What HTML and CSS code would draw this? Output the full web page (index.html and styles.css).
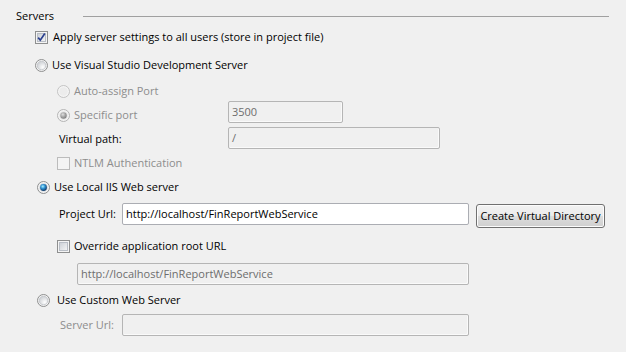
FILE: index.html
```html
<!DOCTYPE html>
<html>
<head>
<meta charset="utf-8">
<link rel="stylesheet" href="styles.css">
</head>
<body>
<div class="panel">
  <div class="header"><span class="title">Servers</span><span class="rule"></span></div>

  <div class="row r-apply">
    <svg class="box" width="13" height="13" viewBox="0 0 13 13"><use href="#cb-checked"/></svg>
    <span class="lbl">Apply server settings to all users (store in project file)</span>
  </div>

  <div class="row r-vs">
    <svg class="rad" width="13" height="13" viewBox="0 0 13 13"><use href="#rb-off"/></svg>
    <span class="lbl">Use Visual Studio Development Server</span>
  </div>

  <div class="row r-auto sub">
    <svg class="rad" width="13" height="13" viewBox="0 0 13 13"><use href="#rb-dis"/></svg>
    <span class="lbl dis">Auto-assign Port</span>
  </div>

  <div class="row r-spec sub">
    <div class="lead">
      <svg class="rad" width="13" height="13" viewBox="0 0 13 13"><use href="#rb-dis-on"/></svg>
      <span class="lbl dis">Specific port</span>
    </div>
    <div class="input dis-in port">3500</div>
  </div>

  <div class="row r-vpath">
    <span class="lbl field-lbl">Virtual path:</span>
    <div class="input dis-in vpath">/</div>
  </div>

  <div class="row r-ntlm sub">
    <svg class="box" width="13" height="13" viewBox="0 0 13 13"><use href="#cb-dis"/></svg>
    <span class="lbl dis">NTLM Authentication</span>
  </div>

  <div class="row r-iis">
    <svg class="rad" width="13" height="13" viewBox="0 0 13 13"><use href="#rb-on"/></svg>
    <span class="lbl">Use Local IIS Web server</span>
  </div>

  <div class="row r-proj">
    <span class="lbl field-lbl">Project Url:</span>
    <div class="input url">http://localhost/FinReportWebService</div>
    <div class="btn">Create Virtual Directory</div>
  </div>

  <div class="row r-over sub">
    <svg class="box" width="13" height="13" viewBox="0 0 13 13"><use href="#cb-off"/></svg>
    <span class="lbl">Override application root URL</span>
  </div>

  <div class="row r-root">
    <div class="input dis-in root">http://localhost/FinReportWebService</div>
  </div>

  <div class="row r-custom">
    <svg class="rad" width="13" height="13" viewBox="0 0 13 13"><use href="#rb-off"/></svg>
    <span class="lbl">Use Custom Web Server</span>
  </div>

  <div class="row r-server">
    <span class="lbl field-lbl dis">Server Url:</span>
    <div class="input dis-in surl"></div>
  </div>
</div>

<svg class="defs" width="0" height="0">
  <defs>
    <linearGradient id="cbFill" x1="0" y1="0" x2="1" y2="1">
      <stop offset="0" stop-color="#cbcfd5"/>
      <stop offset="1" stop-color="#f6f6f6"/>
    </linearGradient>
    <radialGradient id="rbFill" cx="0.65" cy="0.7" r="0.7">
      <stop offset="0" stop-color="#ffffff"/>
      <stop offset="1" stop-color="#cdd0d4"/>
    </radialGradient>
    <radialGradient id="dotBlue" cx="0.4" cy="0.35" r="0.7">
      <stop offset="0" stop-color="#a8f0ff"/>
      <stop offset="0.45" stop-color="#2c8fd0"/>
      <stop offset="1" stop-color="#0c2e5a"/>
    </radialGradient>
    <radialGradient id="dotGray" cx="0.4" cy="0.35" r="0.7">
      <stop offset="0" stop-color="#e0e0e0"/>
      <stop offset="0.5" stop-color="#a8a8a8"/>
      <stop offset="1" stop-color="#7a7a7a"/>
    </radialGradient>
    <g id="cb-checked">
      <rect x="0.5" y="0.5" width="12" height="12" fill="#f4f4f4" stroke="#8e8f8f"/>
      <rect x="2.5" y="2.5" width="8" height="8" fill="url(#cbFill)" stroke="#b9bec6"/>
      <path d="M3.2 6.6 L5.3 9.2 L9.8 2.6" fill="none" stroke="#2a3f8f" stroke-width="1.7"/>
    </g>
    <g id="cb-off">
      <rect x="0.5" y="0.5" width="12" height="12" fill="#f4f4f4" stroke="#8e8f8f"/>
      <rect x="2.5" y="2.5" width="8" height="8" fill="url(#cbFill)" stroke="#b9bec6"/>
    </g>
    <g id="cb-dis">
      <rect x="0.5" y="0.5" width="12" height="12" fill="#f4f4f4" stroke="#bcbcbc"/>
    </g>
    <g id="rb-off">
      <circle cx="6.5" cy="6.5" r="6" fill="#f4f4f4" stroke="#8e8f8f"/>
      <circle cx="6.5" cy="6.5" r="4.3" fill="url(#rbFill)" stroke="#c0c3c8" stroke-width="0.8"/>
    </g>
    <g id="rb-on">
      <circle cx="6.5" cy="6.5" r="6" fill="#f4f4f4" stroke="#8e8f8f"/>
      <circle cx="6.5" cy="6.5" r="4.3" fill="#d4d7dc"/>
      <circle cx="6.5" cy="6.5" r="3.4" fill="url(#dotBlue)"/>
    </g>
    <g id="rb-dis">
      <circle cx="6.5" cy="6.5" r="6" fill="#f4f4f4" stroke="#c3c3c3"/>
      <circle cx="6.5" cy="6.5" r="4.3" fill="#ececec"/>
    </g>
    <g id="rb-dis-on">
      <circle cx="6.5" cy="6.5" r="6" fill="#f4f4f4" stroke="#b4b4b4"/>
      <circle cx="6.5" cy="6.5" r="4.3" fill="#e6e6e6"/>
      <circle cx="6.5" cy="6.5" r="3.2" fill="url(#dotGray)"/>
    </g>
  </defs>
</svg>
</body>
</html>
```
FILE: styles.css
```css
html, body {
  margin: 0;
  padding: 0;
  background: #f0f0f0;
}
body {
  width: 626px;
  height: 352px;
  overflow: hidden;
  font-family: "Open Sans", "Noto Sans", sans-serif;
  font-size: 11px;
  color: #000;
}
.panel {
  display: flex;
  flex-direction: column;
  padding-top: 8px;
}
.header {
  display: flex;
  height: 16px;
  padding-left: 16px;
  padding-right: 17px;
}
.title {
  line-height: 16px;
  white-space: nowrap;
}
.rule {
  flex: 1;
  height: 0;
  border-top: 1px solid #a0a0a0;
  margin-top: 8px;
  margin-left: 29px;
}
.row {
  display: flex;
  align-items: center;
  height: 16px;
  white-space: nowrap;
}
.lbl { line-height: 16px; }
.dis { color: #8d8d8d; }
.box, .rad { flex: none; display: block; }

.r-apply { margin-top: 5px; padding-left: 35px; }
.r-apply .box { margin-right: 5px; }
.r-vs { margin-top: 12px; padding-left: 35px; }
.r-vs .rad { margin-right: 4px; }
.sub { padding-left: 57px; }
.sub .rad, .sub .box { margin-right: 4px; }
.r-auto { margin-top: 10px; }
.r-spec { margin-top: 2px; height: 22px; }
.lead { display: flex; align-items: center; width: 171px; margin-top: 6px; }
.r-vpath { margin-top: 4px; height: 22px; padding-left: 59px; }
.r-vpath .field-lbl { width: 169px; margin-top: 2px; }
.r-ntlm { margin-top: 6px; }
.r-iis { margin-top: 8px; padding-left: 37px; }
.r-iis .rad { margin-right: 4px; }
.r-proj { margin-top: 8px; height: 26px; padding-left: 59px; align-items: flex-start; }
.r-proj .field-lbl { width: 63px; margin-top: 3px; }
.r-over { margin-top: 9px; }
.r-root { margin-top: 9px; height: 22px; padding-left: 77px; }
.r-custom { margin-top: 7px; padding-left: 37px; }
.r-custom .rad { margin-right: 7px; }
.r-server { margin-top: 6px; height: 22px; padding-left: 60px; }
.r-server .field-lbl { width: 62px; }

.input {
  box-sizing: border-box;
  height: 22px;
  border: 1px solid #abadb3;
  border-radius: 2px;
  background: #fff;
  padding: 0 3px;
  line-height: 20px;
  flex: none;
}
.dis-in {
  background: #f0f0f0;
  border-color: #b5b5b5;
  color: #6d6d6d;
  box-shadow: inset -1px -1px 0 #fafafa;
}
.port { width: 115px; }
.vpath { width: 212px; }
.url { width: 347px; }
.root { width: 392px; }
.surl { width: 347px; }

.btn {
  box-sizing: border-box;
  flex: none;
  margin-left: 7px;
  margin-top: 1px;
  width: 129px;
  height: 24px;
  border: 1px solid #707070;
  border-radius: 3px;
  background: linear-gradient(#f2f2f2 0%, #ebebeb 50%, #dddddd 50%, #cfcfcf 100%);
  box-shadow: inset 0 0 0 1px #fcfcfc;
  text-align: center;
  line-height: 22px;
}
.defs { position: absolute; width: 0; height: 0; }
```
